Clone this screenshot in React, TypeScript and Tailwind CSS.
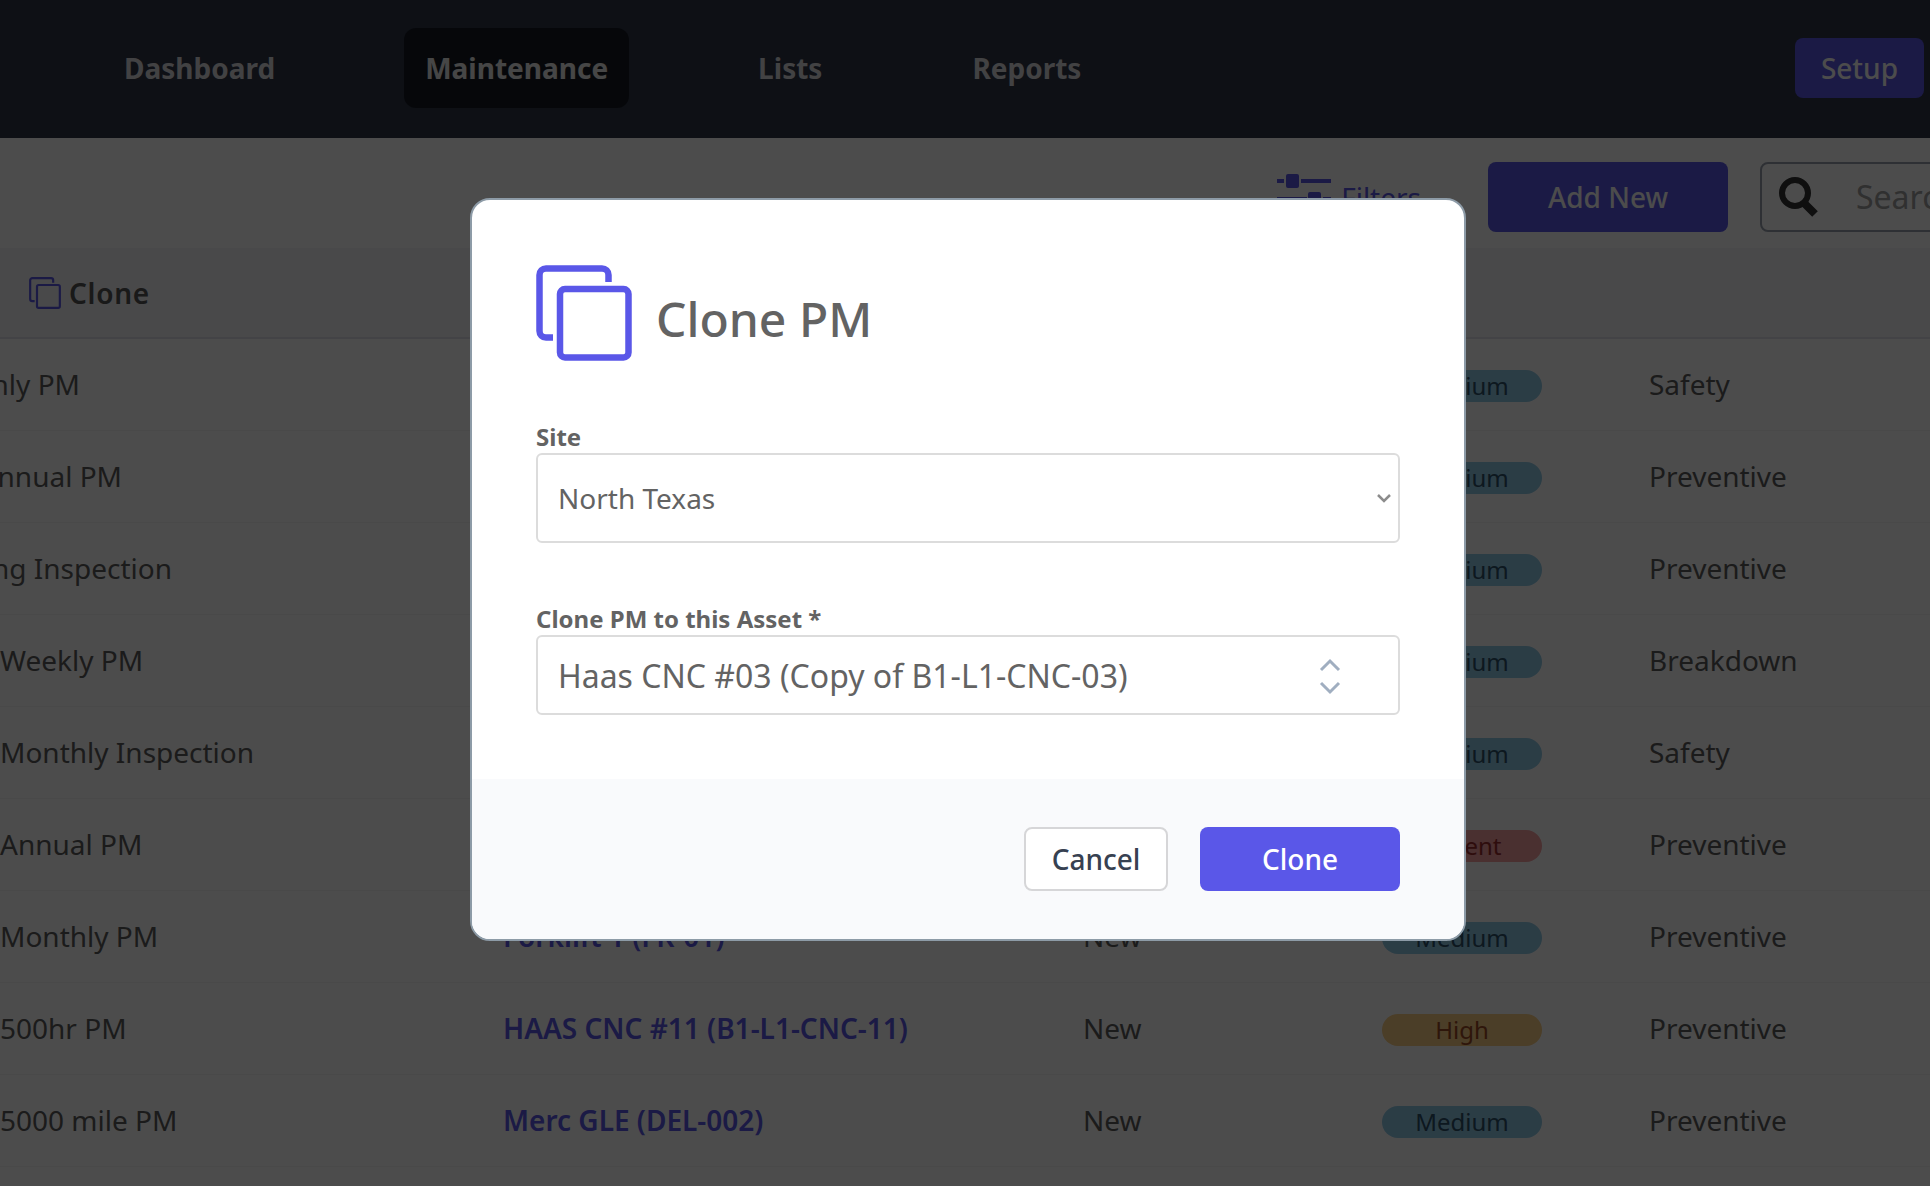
import { useState } from 'react'

const navItems = [
  { label: 'Dashboard', active: false },
  { label: 'Maintenance', active: true },
  { label: 'Lists', active: false },
  { label: 'Reports', active: false },
]

const rows = [
  { name: 'Monthly PM', right: 80, status: 'New', priority: 'Medium', type: 'Safety' },
  { name: 'Annual PM', right: 122, status: 'New', priority: 'Medium', type: 'Preventive' },
  { name: 'Building Inspection', right: 172, status: 'New', priority: 'Medium', type: 'Preventive' },
  { name: 'Weekly PM', status: 'New', priority: 'Medium', type: 'Breakdown' },
  { name: 'Monthly Inspection', status: 'New', priority: 'Medium', type: 'Safety' },
  { name: 'Annual PM', status: 'New', priority: 'Urgent', type: 'Preventive' },
  { name: 'Monthly PM', asset: 'Forklift 1 (FK-01)', status: 'New', priority: 'Medium', type: 'Preventive' },
  { name: '500hr PM', asset: 'HAAS CNC #11 (B1-L1-CNC-11)', status: 'New', priority: 'High', type: 'Preventive' },
  { name: '5000 mile PM', asset: 'Merc GLE (DEL-002)', status: 'New', priority: 'Medium', type: 'Preventive' },
]

const badgeColors: Record<string, string> = {
  Medium: 'bg-[#92cbe8] text-[#2c5068]',
  High: 'bg-[#fbcf85] text-[#9c4a26]',
  Urgent: 'bg-[#f8a0a2] text-[#9b2c2c]',
}

function CloneIcon({ className }: { className: string }) {
  return (
    <svg className={className} viewBox="0 0 96 96" fill="none" stroke="currentColor" strokeWidth="6.5" aria-hidden="true">
      <path d="M72.5 17V10a6.500 6.500 0 0 0-6.500-6.500H10A6.500 6.500 0 0 0 3.500 10v56a6.500 6.500 0 0 0 6.500 6.500h7" />
      <rect x="24" y="24" width="68.5" height="68.5" rx="5" />
    </svg>
  )
}

function Header() {
  return (
    <header className="flex h-[138px] items-center bg-[#2f3647] pr-1.5 pb-0.5 pl-[103px]">
      <nav className="flex flex-1 items-center gap-[108px]">
        {navItems.map((item) => (
          <a
            key={item.label}
            href="#"
            className={
              item.active
                ? 'rounded-xl bg-[#151a24] px-[21px] py-5 text-[28px] leading-10 font-bold text-[#ececec]'
                : 'rounded-xl px-[21px] py-5 text-[28px] leading-10 font-bold text-[#dcdce0]'
            }
          >
            {item.label}
          </a>
        ))}
      </nav>
      <button className="h-[60px] rounded-lg bg-[#5a57e8] px-[26px] text-[28px] font-medium text-white">Setup</button>
    </header>
  )
}

function Toolbar() {
  return (
    <div className="-mr-40 flex h-[110px] items-start justify-end pt-6">
      <button className="mr-[67px] flex h-[70px] items-center gap-2.5 text-[28px] text-[#5a57e8]">
        <svg className="h-[46px] w-[54px]" viewBox="0 0 54 46" fill="currentColor" aria-hidden="true">
          <path d="M0 5h7v4H0zM24 5h30v4H24zM0 23h30v4H0zM46 23h8v4h-8z" />
          <rect x="9" y="0" width="13" height="14" rx="2" />
          <rect x="31" y="18" width="13" height="14" rx="2" />
        </svg>
        Filters
      </button>
      <button className="mr-8 h-[70px] w-60 rounded-lg bg-[#5a57e8] text-[28px] font-medium text-white">Add New</button>
      <label className="flex h-[70px] w-[330px] items-center rounded-lg border-2 border-gray-400 pl-4">
        <svg className="h-10 w-10 text-[#333]" viewBox="0 0 40 40" fill="none" stroke="currentColor" aria-hidden="true">
          <circle cx="17" cy="16" r="13" strokeWidth="6" />
          <path d="M26 26l11 11" strokeWidth="8" />
        </svg>
        <input type="text" placeholder="Search" aria-label="Search" className="ml-[38px] w-40 text-[32px] placeholder:text-[#a0a0a0]" />
      </label>
    </div>
  )
}

function ScheduleTable() {
  return (
    <table className="w-full table-fixed text-left text-[28px] text-[#5c5c5c]">
      <colgroup>
        <col className="w-[503px]" />
        <col className="w-[580px]" />
        <col className="w-[299px]" />
        <col className="w-[267px]" />
        <col />
      </colgroup>
      <thead>
        <tr className="h-[90px] border-b-2 border-[#e2e2ea] bg-[#f3f3f8]">
          <th colSpan={5} className="pl-[29px] font-semibold text-[#555]">
            <button className="flex items-center gap-2 tracking-wide">
              <CloneIcon className="h-8 w-8 text-[#5a57e8]" />
              Clone
            </button>
          </th>
        </tr>
      </thead>
      <tbody>
        {rows.map((row, i) => (
          <tr key={i} className="h-[92px] border-b border-[#f6f6f6]">
            <td className="overflow-hidden whitespace-nowrap">
              {row.right ? (
                <span className="flex justify-end" style={{ width: row.right }}>{row.name}</span>
              ) : (
                row.name
              )}
            </td>
            <td className="font-semibold">
              {row.asset && <a href="#" className="text-[#5a57e8]">{row.asset}</a>}
            </td>
            <td>{row.status}</td>
            <td>
              <span className={`mt-1 block h-8 w-40 rounded-full text-center text-2xl leading-8 ${badgeColors[row.priority]}`}>
                {row.priority}
              </span>
            </td>
            <td>{row.type}</td>
          </tr>
        ))}
      </tbody>
    </table>
  )
}

function CloneModal() {
  const [site, setSite] = useState('North Texas')
  const [asset, setAsset] = useState('Haas CNC #03 (Copy of B1-L1-CNC-03)')

  return (
    <div className="fixed inset-0 flex items-start justify-center bg-black/70 pt-[198px] pl-1.5">
      <div role="dialog" aria-labelledby="clone-title" className="w-[996px] overflow-hidden rounded-[20px] border-2 border-[#8d9ba7] bg-white text-[#636363]">
        <div className="px-16 pt-[65px] pb-16">
          <div className="flex gap-6">
            <CloneIcon className="h-24 w-24 text-[#5a57e8]" />
            <h2 id="clone-title" className="pt-4.5 text-5xl leading-[72px] font-medium">Clone PM</h2>
          </div>

          <label htmlFor="site" className="mt-[60px] block text-2xl leading-8 font-bold">Site</label>
          <div className="relative">
            <select
              id="site"
              value={site}
              onChange={(e) => setSite(e.target.value)}
              className="h-[90px] w-full appearance-none rounded-md border-2 border-[#dcdcdc] bg-white px-5 text-[28px]"
            >
              <option>North Texas</option>
            </select>
            <svg className="pointer-events-none absolute top-[39px] right-2 h-3 w-4" viewBox="0 0 16 12" fill="none" stroke="#8c8c8c" strokeWidth="2.5" aria-hidden="true">
              <path d="M2 3l6 6 6-6" />
            </svg>
          </div>

          <label htmlFor="asset" className="mt-[60px] block text-2xl leading-8 font-bold">Clone PM to this Asset *</label>
          <div className="relative">
            <input
              id="asset"
              type="text"
              value={asset}
              onChange={(e) => setAsset(e.target.value)}
              className="block h-20 w-full rounded-md border-2 border-[#dcdcdc] px-5 text-[32px]"
            />
            <svg className="pointer-events-none absolute top-[21px] right-[58px] h-10 w-6" viewBox="0 0 24 40" fill="none" stroke="#a0aec0" strokeWidth="3" aria-hidden="true">
              <path d="M3 14l9-9 9 9M3 27l9 9 9-9" />
            </svg>
          </div>
        </div>

        <div className="flex justify-end gap-8 bg-[#f9fafc] px-16 py-12">
          <button className="h-16 w-36 rounded-lg border-2 border-[#d6d6d8] bg-white text-[28px] font-medium text-[#374151]">Cancel</button>
          <button className="h-16 w-[200px] rounded-lg bg-[#5a57e8] text-[28px] font-medium text-white">Clone</button>
        </div>
      </div>
    </div>
  )
}

export default function App() {
  return (
    <div className="h-screen overflow-hidden bg-white font-['Noto_Sans',sans-serif]">
      <Header />
      <Toolbar />
      <ScheduleTable />
      <CloneModal />
    </div>
  )
}
